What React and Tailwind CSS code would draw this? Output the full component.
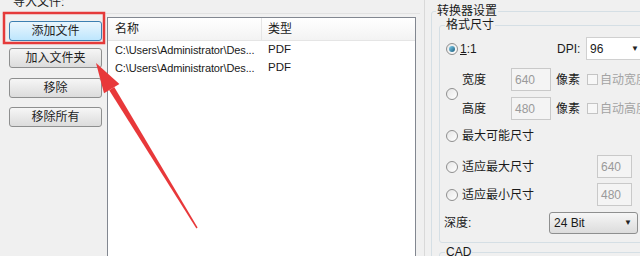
import React from 'react'

const font = { fontFamily: '"Liberation Sans","Noto Sans CJK SC",sans-serif' }

const WinButton = ({ children, active = false, className = '' }) => (
  <div
    className={`h-[20px] w-[93px] flex items-center justify-center rounded-[3px] border text-[12px] leading-none text-[#1e1e1e] ${
      active
        ? 'border-[#3c7fb1] bg-gradient-to-b from-[#eaf6fd] to-[#bee6fd]'
        : 'border-[#8e8f8f] bg-gradient-to-b from-[#f6f6f6] to-[#dcdcdc]'
    } ${className}`}
  >
    {children}
  </div>
)

const Radio = ({ checked = false }) => (
  <span className="w-[12px] h-[12px] rounded-full border border-[#8f8f8f] bg-gradient-to-br from-[#e6e6e6] to-[#ffffff] flex items-center justify-center shrink-0">
    {checked && <span className="w-[6px] h-[6px] rounded-full bg-gradient-to-br from-[#7fd0f0] to-[#1a5e7e]" />}
  </span>
)

const Check = () => (
  <span className="w-[11px] h-[11px] border border-[#c4c4c4] bg-[#f7f7f7] shrink-0" />
)

const NumBox = ({ value, className = '' }) => (
  <div className={`h-[23px] border border-[#c9c9c9] bg-[#f4f4f4] text-[12px] text-[#9a9a9a] flex items-center pl-[3px] ${className}`}>
    {value}
  </div>
)

const Arrow = () => (
  <svg className="absolute inset-0 pointer-events-none" width="640" height="256">
    <rect x="4" y="13" width="100" height="30" fill="none" stroke="#e53a3a" strokeWidth="2.5" />
    <polygon points="114.2,87 109.2,90.2 196.4,228.4 197.6,227.6" fill="#e8383a" />
    <polygon points="96,63 119.4,83.9 104,93.3" fill="#e8383a" />
  </svg>
)

export default function App() {
  return (
    <div className="relative w-[640px] h-[256px] overflow-hidden bg-[#f0f0f0] flex text-[#1a1a1a]" style={font}>
      {/* import files */}
      <div className="w-[425px] shrink-0 border-r border-[#d9d9d9] flex flex-col">
        <div className="h-[14px] border-b border-[#e2e2e2] ml-[2px] mr-[4px] relative">
          <span className="absolute left-[10px] top-[-6px] text-[12px] leading-[16px] bg-[#f0f0f0] px-[1px]">导入文件:</span>
        </div>
        <div className="flex flex-1 pt-[3px]">
          <div className="w-[107px] shrink-0 pl-[9px] pt-[4px] flex flex-col">
            <WinButton active>添加文件</WinButton>
            <WinButton className="mt-[7px]">加入文件夹</WinButton>
            <WinButton className="mt-[10px]">移除</WinButton>
            <WinButton className="mt-[9px]">移除所有</WinButton>
          </div>
          <div className="flex-1 mr-[8px] bg-white border border-[#828790] border-b-0 flex flex-col text-[12px]">
            <div className="h-[23px] flex border-b border-[#e5e5e5] bg-gradient-to-b from-[#ffffff] to-[#f3f3f3]">
              <div className="w-[154px] pl-[7px] flex items-center border-r border-[#e5e5e5]">名称</div>
              <div className="pl-[6px] flex items-center">类型</div>
            </div>
            {[0, 1].map((i) => (
              <div key={i} className="h-[18px] flex items-center">
                <div className="w-[154px] pl-[7px] whitespace-nowrap text-[11px] tracking-[-0.1px]">C:\Users\Administrator\Des...</div>
                <div className="pl-[6px] text-[11.5px]">PDF</div>
              </div>
            ))}
          </div>
        </div>
      </div>

      {/* converter settings */}
      <div className="flex-1 pl-[6px] pt-[3px] text-[12px]">
        <fieldset className="border border-[#d5dfe5] rounded-[3px] p-0 h-[270px] w-[220px]">
          <legend className="ml-[4px] px-[1px] leading-[16px]">转换器设置</legend>
          <fieldset className="-mt-[1px] ml-[7px] border border-[#d5dfe5] rounded-[3px] p-0 h-[225px]">
            <legend className="ml-[5px] px-[1px] leading-[14px]">格式尺寸</legend>
            <div className="pl-[6px] pt-[5px] flex flex-col">
              <div className="h-[23px] flex items-center">
                <Radio checked />
                <span className="ml-[2px] w-[97px]"><span className="underline">1</span>:1</span>
                <span className="w-[29px]">DPI:</span>
                <div className="h-[23px] w-[57px] shrink-0 bg-white border border-[#d0d0d0] flex items-center justify-between pl-[3px] pr-[3px]">
                  <span>96</span>
                  <span className="text-[8px] text-[#222]">▼</span>
                </div>
              </div>
              <div className="flex items-center mt-[8px]">
                <Radio />
                <div className="ml-[4px] flex flex-col gap-[6px]">
                  {[['宽度', '640', '自动宽度'], ['高度', '480', '自动高度']].map(([l, v, c]) => (
                    <div key={l} className="h-[23px] flex items-center whitespace-nowrap">
                      <span className="w-[49px]">{l}</span>
                      <NumBox value={v} className="w-[40px]" />
                      <span className="ml-[5px] w-[31px]">像素</span>
                      <Check />
                      <span className="ml-[2px] text-[#a3a3a3]">{c}</span>
                    </div>
                  ))}
                </div>
              </div>
              <div className="h-[20px] mt-[6px] flex items-center">
                <Radio />
                <span className="ml-[4px]">最大可能尺寸</span>
              </div>
              {[['适应最大尺寸', '640'], ['适应最小尺寸', '480']].map(([l, v], i) => (
                <div key={l} className={`h-[23px] flex items-center ${i === 0 ? 'mt-[9px]' : 'mt-[5px]'}`}>
                  <Radio />
                  <span className="ml-[4px] w-[135px]">{l}</span>
                  <NumBox value={v} className="w-[35px] h-[22px]" />
                </div>
              ))}
              <div className="h-[22px] mt-[6px] flex items-center -ml-[2px]">
                <span className="w-[105px]">深度:</span>
                <div className="h-[22px] w-[89px] rounded-[3px] border border-[#8e8f8f] bg-gradient-to-b from-[#f6f6f6] to-[#dcdcdc] flex items-center justify-between pl-[4px] pr-[5px]">
                  <span>24 Bit</span>
                  <span className="text-[8px] text-[#222]">▼</span>
                </div>
              </div>
            </div>
          </fieldset>
          <fieldset className="mt-[2px] ml-[7px] border border-[#d5dfe5] rounded-[3px] p-0 h-[30px]">
            <legend className="ml-[5px] px-[1px] leading-[14px]">CAD</legend>
          </fieldset>
        </fieldset>
      </div>

      <Arrow />
    </div>
  )
}
